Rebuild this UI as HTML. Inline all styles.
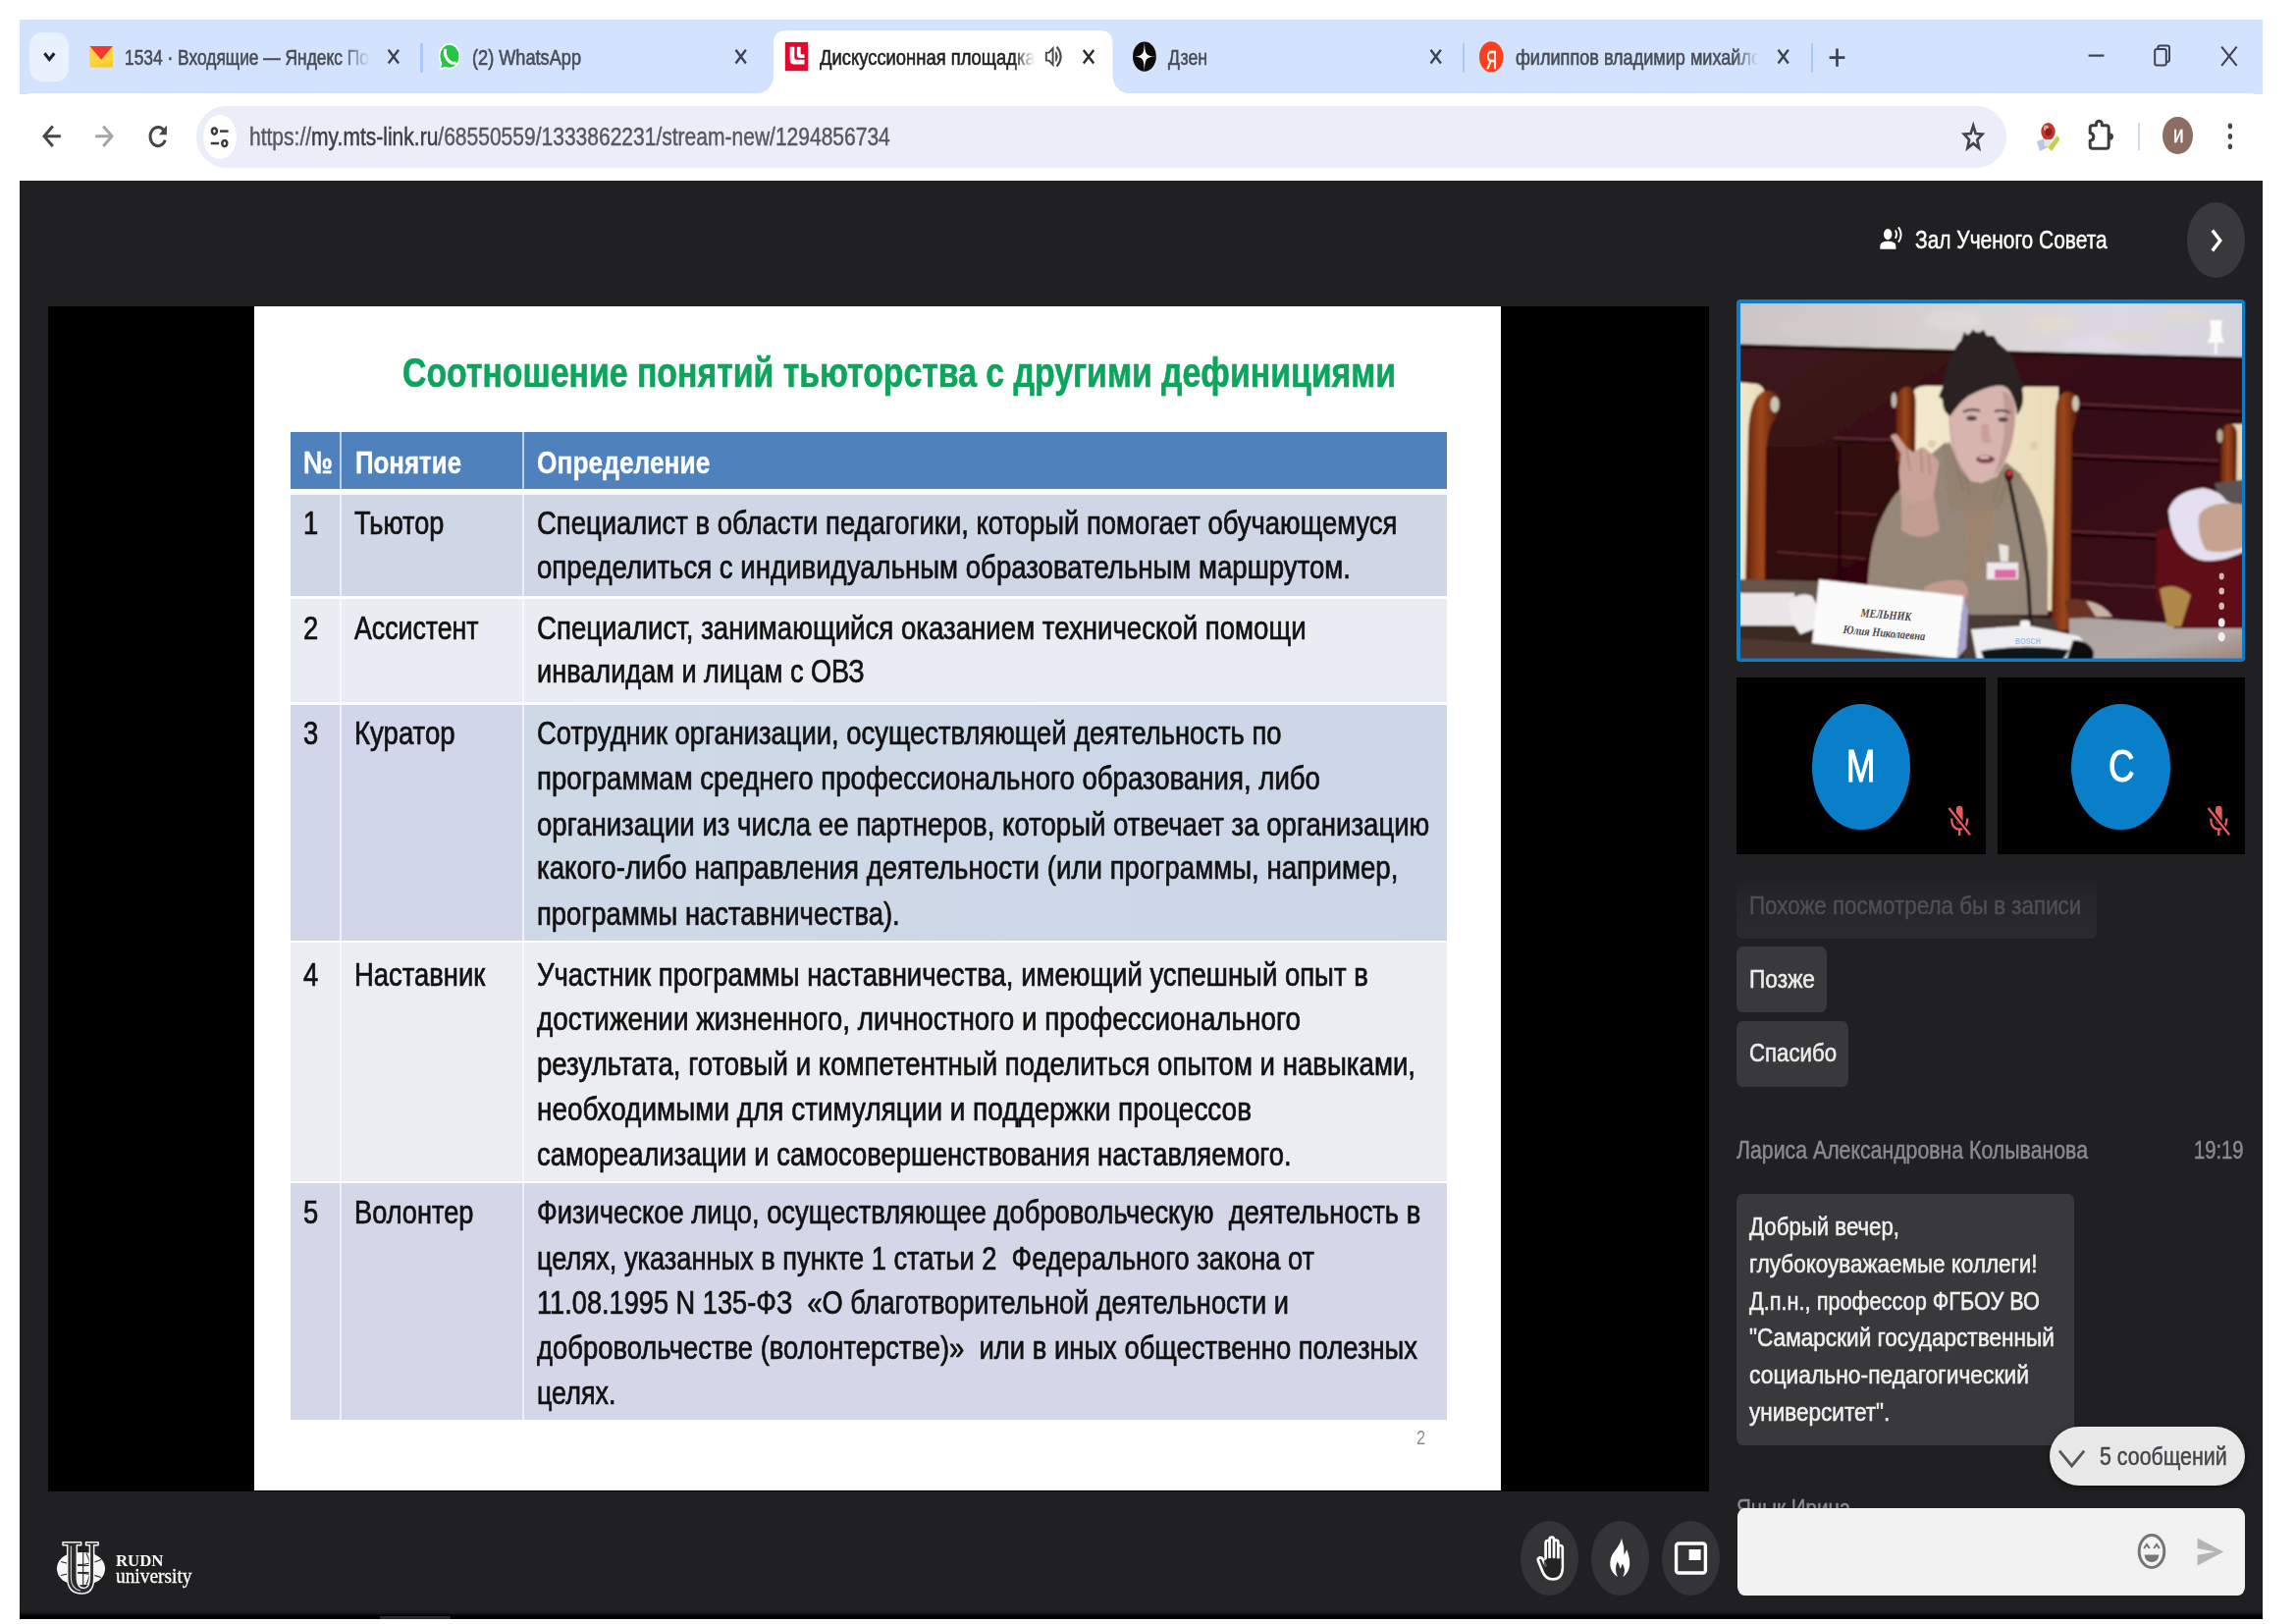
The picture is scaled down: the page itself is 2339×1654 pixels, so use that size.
<!DOCTYPE html>
<html lang="ru"><head><meta charset="utf-8"><title>Дискуссионная площадка</title>
<style>

html,body{margin:0;padding:0;background:#fff;}
body{width:2339px;height:1654px;position:relative;overflow:hidden;font-family:"Liberation Sans",sans-serif;}
div,svg,span.t{position:absolute;}
span.t{white-space:pre;line-height:1;transform-origin:0 0;display:block;}
div.clip{overflow:hidden;}
span.m{visibility:hidden;}

</style></head>
<body>
<div style="left:20.0px;top:20.0px;width:2285.0px;height:76.0px;background:#d3e3fd;"></div>
<div style="left:20.0px;top:95.0px;width:2285.0px;height:89.5px;background:#fff;border-radius:12px 12px 0 0/15px 15px 0 0;"></div>
<div style="left:30.0px;top:32.5px;width:39.6px;height:50.2px;background:#e9f1fe;border-radius:12px/15px;"></div>
<svg style="left:766.0px;top:31.0px;" width="389.5" height="65.0" viewBox="0 0 389.5 65" preserveAspectRatio="none"><path d="M0 65 C12 64.5 22.2 60 22.2 44 L22.2 13 C22.2 4 27 0 35 0 L354.5 0 C362.5 0 367.500 4 367.500 13 L367.500 44 C367.500 60 377.500 64.5 389.5 65 Z" fill="#fff"/></svg>
<div style="left:428.3px;top:44.0px;width:2.4px;height:29.6px;background:#a8c7fa;border-radius:1px;"></div>
<div style="left:1489.8px;top:44.0px;width:2.4px;height:29.6px;background:#a8c7fa;border-radius:1px;"></div>
<div style="left:1844.8px;top:44.0px;width:2.4px;height:29.6px;background:#a8c7fa;border-radius:1px;"></div>
<div style="left:200.3px;top:108.3px;width:1843.7px;height:62.7px;background:#ebeef8;border-radius:31px;"></div>
<div style="left:206.8px;top:116.7px;width:34.0px;height:45.7px;background:#fff;border-radius:50%;"></div>
<div style="left:2178.3px;top:124.5px;width:1.6px;height:28.5px;background:#d2daec;"></div>
<div style="left:2203.4px;top:119.3px;width:30.6px;height:37.9px;background:#8c6d62;border-radius:50%;"></div>
<div style="left:20.0px;top:184.0px;width:2285.0px;height:1465.0px;background:#202022;"></div>
<div style="left:20.0px;top:1640.0px;width:2285.0px;height:9.0px;background:linear-gradient(#202022 0%,#19191b 30%,#000 62%,#000 100%);"></div>
<div style="left:387.0px;top:1645.5px;width:72.0px;height:3.5px;background:#2b2b2d;"></div>
<div style="left:48.5px;top:312.3px;width:1692.5px;height:1206.7px;background:#000;"></div>
<div style="left:258.7px;top:312.3px;width:1270.0px;height:1206.2px;background:#fff;"></div>
<div style="left:295.7px;top:440.3px;width:1178.3px;height:57.5px;background:#4f81bd;"></div>
<div style="left:295.7px;top:497.8px;width:1178.3px;height:6.5px;background:linear-gradient(#fff,#f4f6fa);"></div>
<div style="left:295.7px;top:504.3px;width:1178.3px;height:103.2px;background:#cfd6e6;"></div>
<div style="left:295.7px;top:609.5px;width:1178.3px;height:106.0px;background:#e9ecf3;"></div>
<div style="left:295.7px;top:717.5px;width:1178.3px;height:240.3px;background:#cfd7e7;"></div>
<div style="left:295.7px;top:960.0px;width:1178.3px;height:243.0px;background:#ebedf2;"></div>
<div style="left:295.7px;top:1204.5px;width:1178.3px;height:241.5px;background:#d3d7e8;"></div>
<div style="left:295.7px;top:717.5px;width:237.7px;height:240.3px;background:#d2d6ea;"></div>
<div style="left:533.4px;top:717.5px;width:940.6px;height:240.3px;background:linear-gradient(90deg,#cfd9e6,#cdd6e8);"></div>
<div style="left:346.1px;top:440.3px;width:2.2px;height:1005.7px;background:rgba(255,255,255,.62);"></div>
<div style="left:532.3px;top:440.3px;width:2.2px;height:1005.7px;background:rgba(255,255,255,.62);"></div>
<div style="left:295.7px;top:607.3px;width:1178.3px;height:2.4px;background:rgba(255,255,255,.8);"></div>
<div style="left:295.7px;top:715.3px;width:1178.3px;height:2.4px;background:rgba(255,255,255,.8);"></div>
<div style="left:295.7px;top:957.7px;width:1178.3px;height:2.4px;background:rgba(255,255,255,.8);"></div>
<div style="left:295.7px;top:1202.6px;width:1178.3px;height:2.4px;background:rgba(255,255,255,.8);"></div>
<div style="left:2228.0px;top:206.0px;width:59.0px;height:77.0px;background:#39393b;border-radius:50%;"></div>
<div style="left:1769.3px;top:304.8px;width:518.0px;height:369.5px;background:#0f7dc6;border-radius:4px;"></div>
<div style="left:1769.4px;top:689.7px;width:253.6px;height:180.3px;background:#000;"></div>
<div style="left:2034.6px;top:689.7px;width:252.4px;height:180.3px;background:#000;"></div>
<div style="left:1845.7px;top:716.8px;width:100.8px;height:128.1px;background:#0a7fc9;border-radius:50%;"></div>
<div style="left:2109.8px;top:716.8px;width:100.9px;height:128.1px;background:#0a7fc9;border-radius:50%;"></div>
<div style="left:1769.4px;top:893.0px;width:366.2px;height:63.0px;background:linear-gradient(#202022 0%,#262628 35%,#2b2b2d 100%);border-radius:0 0 6px 6px/0 0 8px 8px;"></div>
<div style="left:1769.4px;top:964.3px;width:91.6px;height:67.0px;background:#39393b;border-radius:6px/8px;"></div>
<div style="left:1769.4px;top:1039.7px;width:113.6px;height:67.0px;background:#39393b;border-radius:6px/8px;"></div>
<div style="left:1769.4px;top:1216.3px;width:343.6px;height:255.7px;background:#39393b;border-radius:6px/8px;"></div>
<div style="left:1549.1px;top:1549.2px;width:59.4px;height:76.0px;background:#343436;border-radius:50%;"></div>
<div style="left:1621.0px;top:1549.2px;width:59.4px;height:76.0px;background:#343436;border-radius:50%;"></div>
<div style="left:1692.6px;top:1549.2px;width:59.4px;height:76.0px;background:#343436;border-radius:50%;"></div>
<svg style="left:1773px;top:309px;" width="511" height="361.5" viewBox="1773 309 511 361.5" preserveAspectRatio="none">
<defs>
<filter id="pb" x="-5%" y="-5%" width="110%" height="110%"><feGaussianBlur stdDeviation="1.3"/></filter>
<filter id="pb2" x="-5%" y="-5%" width="110%" height="110%"><feGaussianBlur stdDeviation="2.6"/></filter>
<linearGradient id="gwall" x1="0" x2="1" y1="0" y2="0"><stop offset="0" stop-color="#cbc5c6"/><stop offset=".45" stop-color="#d8d4d2"/><stop offset=".75" stop-color="#dcd9e4"/><stop offset="1" stop-color="#d6d3dc"/></linearGradient>
<linearGradient id="gpanel" x1="0" x2="1" y1="0" y2="1"><stop offset="0" stop-color="#3c161c"/><stop offset=".5" stop-color="#350d12"/><stop offset="1" stop-color="#3d1118"/></linearGradient>
<linearGradient id="gwood" x1="0" x2="1" y1="0" y2="0"><stop offset="0" stop-color="#64200a"/><stop offset=".45" stop-color="#9d481d"/><stop offset="1" stop-color="#561b08"/></linearGradient>
<linearGradient id="gcream" x1="0" x2="1" y1="0" y2="0"><stop offset="0" stop-color="#f3e9cf"/><stop offset="1" stop-color="#eadcb8"/></linearGradient>
<linearGradient id="gtable" x1="0" x2="1" y1="0" y2="1"><stop offset="0" stop-color="#aba39f"/><stop offset=".6" stop-color="#b2a8a6"/><stop offset="1" stop-color="#9a7f74"/></linearGradient>
<pattern id="rib" width="3.2" height="8" patternUnits="userSpaceOnUse" patternTransform="rotate(8)"><rect width="3.2" height="8" fill="#a09080"/><rect width="1.2" height="8" fill="#85776a"/></pattern>
<clipPath id="pclip"><rect x="1773" y="309" width="511" height="361.5"/></clipPath>
</defs>
<g clip-path="url(#pclip)">
<g filter="url(#pb)">
<!-- wall -->
<rect x="1770" y="306" width="520" height="62" fill="url(#gwall)"/>
<g filter="url(#pb2)" opacity=".55">
<ellipse cx="2090" cy="330" rx="26" ry="9" fill="#e6dccb"/><ellipse cx="2170" cy="344" rx="30" ry="8" fill="#e2d8c8"/><ellipse cx="2225" cy="322" rx="24" ry="7" fill="#e4dccd"/><ellipse cx="1990" cy="326" rx="30" ry="10" fill="#e2dfe0"/><ellipse cx="1850" cy="335" rx="40" ry="10" fill="#d2cccc"/><ellipse cx="2130" cy="350" rx="30" ry="6" fill="#e3e0ee"/>
</g>
<!-- wood panel -->
<polygon points="1770,351 2290,364.3 2290,675 1770,675" fill="url(#gpanel)"/>
<polyline points="1770,352.5 2290,365.8" stroke="#22080c" stroke-width="4" fill="none"/>
<polygon points="1770,455 1935,455 1935,675 1770,675" fill="#300606" opacity=".85"/>
<!-- panel mouldings -->
<g stroke="#6a3038" stroke-width="2" fill="none" opacity=".8">
<polyline points="1868,446 1930,448"/><polyline points="1870,522 1912,524"/><polyline points="1810,562 1900,569"/>
<polyline points="2112,411 2283,419"/><polyline points="2110,463 2260,469"/><polyline points="2110,541 2200,545"/><polyline points="2110,593 2196,598"/>
</g>
<g stroke="#1f0508" stroke-width="3" fill="none" opacity=".8">
<polyline points="1868,450 1930,452"/><polyline points="2112,415 2283,423"/><polyline points="2110,467 2260,473"/><polyline points="2110,545 2200,549"/>
<polyline points="1874,452 1874,600"/>
</g>
<!-- left chair -->
<path d="M1770 389 L1790 391 Q1798 394 1798 402 L1798 600 L1770 600 Z" fill="url(#gcream)"/>
<path d="M1778 604 L1781 440 Q1783 403 1798 398 Q1811 396 1813 408 Q1814 420 1806 430 Q1799 442 1799 470 L1798 604 Z" fill="url(#gwood)"/>
<ellipse cx="1808" cy="412" rx="4.5" ry="8" fill="#c9c4b4"/>
<!-- centre chair -->
<path d="M1948 402 Q1950 393 1962 393 L2097 394 L2097 622 L1948 622 Z" fill="url(#gcream)"/>
<path d="M1931.500 470 L1931.500 412 Q1932 395 1943 394 Q1951.500 394 1951.500 410 L1951 470 Z" fill="url(#gwood)"/>
<ellipse cx="1929.500" cy="407.500" rx="2.800" ry="8" fill="#bdb8aa"/>
<path d="M2089.500 642 L2094 420 Q2095 400 2106 399 Q2117 399 2117 412 Q2116 426 2111 440 L2108.500 642 Z" fill="url(#gwood)"/>
<ellipse cx="2114.5" cy="411" rx="3.5" ry="8" fill="#c9c4b4"/>
<circle cx="2072" cy="454" r="4" fill="#dccfa8"/><circle cx="1968" cy="452" r="4" fill="#dccfa8"/>
<!-- right chair -->
<rect x="2274" y="432" width="12" height="70" fill="#e6d8b4"/>
<path d="M2262 505 L2263 445 Q2264 432 2271 432 Q2279 432 2279 444 L2278 505 Z" fill="url(#gwood)"/>
<ellipse cx="2261.5" cy="444" rx="3" ry="7" fill="#b5ac98"/>
<!-- table surface -->
<polygon points="1770,590 1856,592 1856,640 1770,638" fill="#66544c"/>
<polygon points="1770,636 1860,640 2010,660 2010,675 1770,675" fill="#3b2a24"/>
<polygon points="1770,650 1850,655 1990,668 1990,675 1770,675" fill="#5a4038" opacity=".7"/>
<polygon points="2108,628 2290,640 2290,675 2108,675" fill="url(#gtable)"/>
<polygon points="2000,624 2092,630 2110,675 2000,675" fill="#4a3a36"/>
<!-- seat hint -->
<path d="M2103 612 Q2125 604 2150 628 L2108 630 Z" fill="#6b3320"/><path d="M2125 612 Q2142 614 2152 628 L2135 628 Z" fill="#c8b4a4"/>
<!-- person right -->
<path d="M2197 540 L2215 536 L2290 560 L2290 640 L2215 640 L2196 610 Z" fill="#5f0b12"/>
<path d="M2200 600 Q2215 592 2232 606 L2222 638 L2208 638 Z" fill="#b08848"/>
<path d="M2256 492 L2290 488 L2290 520 L2262 514 Z" fill="#5b5152"/>
<path d="M2209 520 Q2215 500 2245 497 Q2262 500 2268 510 L2290 520 L2290 560 Q2262 575 2240 570 Q2212 560 2209 520 Z" fill="#e4e0ef"/>
<path d="M2240 525 Q2250 508 2290 514 L2290 556 Q2262 566 2247 560 Q2238 545 2240 525 Z" fill="#c6a291"/>
<!-- papers -->
<rect x="1770" y="604" width="58" height="33" fill="#e9e5e6"/>
<path d="M1822 612 Q1834 602 1846 607 L1854 622 L1850 640 L1834 646 L1826 634 Z" fill="#efecee"/>
<!-- torso / sweater -->
<path d="M1902 612 Q1903 555 1916 529 Q1926 508 1934 500 L1968 462 L1982 450 L1996 488 L2014 515 L2043 471 Q2062 484 2072 505 Q2084 530 2086 560 L2086 624 L2004 624 L2001 612 Z" fill="url(#rib)"/>
<path d="M1996 488 Q2010 500 2034 500 L2030 540 L2012 600 L2003 600 L2004 540 Z" fill="#9d846f"/>
<path d="M1992 478 Q2010 497 2036 497 L2042 472 L2030 500 Q2010 503 1994 490 Z" fill="#8f7a68"/>
<!-- forearm on table -->
<path d="M1958 598 Q1985 585 2004 590 L2060 596 Q2084 600 2086 612 L2086 626 L2006 626 L2000 606 Z" fill="#95867a"/>
<path d="M1960 598 Q1980 588 2000 592 Q2008 600 2003 611 Q1990 606 1962 606 Z" fill="#c39b8d"/>
<!-- raised hand -->
<path d="M1926 444.500 Q1929 441 1932.500 442.500 L1942 455.500 L1949 460.500 L1957.500 455.500 Q1961 455 1964 459 L1973.500 467.500 Q1976 470 1975 475 L1969.500 505 Q1955 516 1937 512.500 L1934.500 480 L1936.500 462 Z" fill="#caa297"/>
<path d="M1942 456 L1946 480 M1957 457 L1958 482 M1965 462 L1966 484" stroke="#a67e74" stroke-width="1.6" fill="none" opacity=".7"/>
<path d="M1937 505 Q1955 516 1970 503 L1976 540 Q1956 554 1937 540 Z" fill="#c4a094" opacity=".92"/>
<path d="M1979 455 L1986 450 L1998 478 L2018 492 L2035 485 L2044 471 L2060 484 L2036 520 L1986 520 Z" fill="#93826f"/>
<path d="M1990 462 L2000 500 M1996 470 L2008 505 M2040 480 L2030 510 M2046 478 L2038 512" stroke="#7d6e5e" stroke-width="1.4" opacity=".6" fill="none"/>
<!-- face -->
<path d="M1984 415 Q1990 398 2010 394 L2044 392 Q2054 400 2053 420 Q2053 440 2048 456 Q2042 474 2031 486 Q2020 494 2008 490 Q1998 478 1991 462 Q1986 444 1985 425 Z" fill="#d7b4ae"/>
<path d="M2040 398 Q2054 404 2053 424 Q2052 446 2046 462 Q2040 478 2030 487 Q2042 460 2042 430 Q2042 410 2040 398 Z" fill="#b8928c" opacity=".75"/>
<path d="M1986 425 Q1988 450 1996 470 Q2002 482 2008 490 Q1994 480 1989 458 Q1985 440 1986 425 Z" fill="#c09a94" opacity=".6"/>
<path d="M2000 419.500 Q2008 415.500 2017 418.500" stroke="#3a2c2a" stroke-width="2" fill="none"/><path d="M2032 419 Q2041 416.500 2048 420.500" stroke="#3a2c2a" stroke-width="2" fill="none"/>
<ellipse cx="2008.500" cy="426" rx="5.500" ry="2.600" fill="#55423f"/><ellipse cx="2040.500" cy="427.300" rx="5" ry="2.400" fill="#55423f"/>
<path d="M2019 432 Q2017 446 2020 450 Q2024 452.500 2029 450 Q2026 444 2026 432 Z" fill="#c39a92" opacity=".75"/>
<ellipse cx="2022.500" cy="467.800" rx="9.500" ry="4" fill="#82464c"/><rect x="2017" y="464.800" width="9" height="2.300" fill="#e2d2cc"/>
<!-- hair -->
<path d="M1978.800 406 Q1979 388 1986 367 Q1992 349 2006 340 Q2014 336 2021 341 Q2035 347 2048 360.500 Q2056 376 2060 396 Q2062.500 408 2059 416 L2055 423 Q2054 410 2048 399 Q2044 392 2036 392.500 Q2022 394 2005 403.500 Q1995 411 1986.500 424 Q1982 420 1981 418 Q1978.600 412 1978.800 406 Z" fill="#2a2422"/>
<path d="M1998 346 L2001 338 L2005 342 L2010 335.500 L2014 340 L2021 336 L2024 342 L2031 342 L2036 350 Z" fill="#2a2422"/>
<path d="M2052 380 L2064 392 L2058 398 Z M1980 392 L1975 404 L1981 408 Z" fill="#2a2422"/>
<!-- badge -->
<path d="M2036 554 L2046 556 L2046 572 L2038 572 Z" fill="#e8e4e0"/>
<rect x="2024" y="573" width="32" height="17" fill="#eee8ea"/><rect x="2032" y="580" width="22" height="9" fill="#e06aa8"/>
<!-- microphone -->
<path d="M2046 487 Q2058 540 2066 590 L2069 642" stroke="#241e1c" stroke-width="3.6" fill="none"/>
<ellipse cx="2046.5" cy="484" rx="4.5" ry="6" fill="#3a1418"/><circle cx="2047" cy="482" r="2.6" fill="#e0303a"/>
<!-- device -->
<path d="M2008 641 L2066 637 L2118 648 L2128 660 L2120 672 L2014 672 Z" fill="#efeff1"/>
<path d="M2018 663 Q2060 655 2108 662 L2100 675 L2022 675 Z" fill="#10121f"/>
<path d="M2112 652 Q2128 652 2133 664 L2132 675 L2104 675 Z" fill="#0c0c10"/>
<rect x="2058" y="632" width="10" height="9" rx="2" fill="#f4f4f4"/>
<!-- name card -->
<polygon points="1853,590 2000.5,607 1993.5,671 1846,655" fill="#fbfbfb"/>
<polygon points="2000.5,607 2005,622 2003,660 1993.5,671" fill="#aaa3cf"/>
</g>
<!-- slider dots -->
<g fill="#e9dcd6"><ellipse cx="2263.2" cy="587" rx="2.6" ry="3.4" fill="#d2b2aa"/><ellipse cx="2263.2" cy="602" rx="2.8" ry="3.6" fill="#d8bcb4"/><ellipse cx="2263.2" cy="617.3" rx="2.8" ry="3.8" fill="#d4b6ae"/><ellipse cx="2263.2" cy="634" rx="3.4" ry="4.6" fill="#efebea"/><ellipse cx="2263.2" cy="648.7" rx="3.6" ry="4.8" fill="#f1eeee"/></g>
<!-- pin -->
<g fill="#fff" filter="url(#pb)" opacity=".95"><path d="M2251 326 L2264 326 Q2262 333 2263.5 343 L2266 349 L2248.5 349 L2251.5 343 Q2253 333 2251 326 Z"/><rect x="2256" y="348" width="2.6" height="12.5"/></g>
</g>
</svg>
<span class="t" style="left:2053px;top:648.5px;font-size:9px;color:#9cc0ea;font-weight:700;transform:scaleX(.8);z-index:3;">BOSCH</span>

<svg style="left:0;top:0;" width="2339" height="1654" viewBox="0 0 2339 1654"><polyline points="45.4,54.3 50.3,60.6 55.3,54.3" stroke="#1a2133" stroke-width="3.1" fill="none"/>
<rect x="91.4" y="47" width="23.5" height="21.4" fill="#fcd43a"/><polygon points="91.4,47 114.9,47 103.1,60.8" fill="#f8352f"/><polygon points="91.4,68.4 114.9,68.4 114.9,62 " fill="#fbbf2d" opacity=".6"/>
<path d="M395.7 50.8 L406.1 64.4 M406.1 50.8 L395.7 64.4" stroke="#3c4252" stroke-width="2.4" fill="none"/>
<path d="M749.5 50.8 L759.9 64.4 M759.9 50.8 L749.5 64.4" stroke="#3c4252" stroke-width="2.4" fill="none"/>
<path d="M1457.5 50.8 L1467.9 64.4 M1467.9 50.8 L1457.5 64.4" stroke="#3c4252" stroke-width="2.4" fill="none"/>
<path d="M1811.5 50.8 L1821.9 64.4 M1821.9 50.8 L1811.5 64.4" stroke="#3c4252" stroke-width="2.4" fill="none"/>
<path d="M1103.8 50.9 L1114.2 64.5 M1114.2 50.9 L1103.8 64.5" stroke="#2a2a2a" stroke-width="2.4" fill="none"/>
<g><path d="M447.3 71.6 L449.6 62.5 L456 68.6 Z" fill="#fff"/><ellipse cx="457.9" cy="57.2" rx="11" ry="13.2" fill="#fff"/><ellipse cx="457.9" cy="57.2" rx="9.5" ry="11.5" fill="#27c546"/><path d="M449.2 69.2 L450.6 63.5 L454.6 67.4 Z" fill="#27c546"/><path d="M453.6 51.2 Q452.6 56.5 456.2 61 Q459.6 65 463.4 64.2" stroke="#fff" stroke-width="3" fill="none" stroke-linecap="round"/></g>
<rect x="799.8" y="42.9" width="23.3" height="29.3" fill="#e3082d"/><path d="M804.7 47.8 H809.3 V58.5 Q809.3 60.7 811.3 60.7 H819.5 V65.4 H808.7 Q804.7 65.4 804.7 60.5 Z" fill="#fff"/><path d="M811.9 47.8 H815.6 V54 Q815.6 55.3 816.8 55.3 H819.5 V58.9 H815 Q811.9 58.9 811.9 55 Z" fill="#fff"/>
<g stroke="#474747" fill="none"><path d="M1065.8 53.6 H1068.6 L1072.6 49.4 V65.800 L1068.6 61.600 H1065.8 Z" stroke-width="1.9"/><path d="M1075.800 52.800 Q1078.800 57.600 1075.800 62.400 Z" fill="#474747" stroke-width="1"/><path d="M1076.600 47.600 Q1084.600 57.600 1076.600 67.600" stroke-width="2.100"/></g>
<ellipse cx="1165.9" cy="57.6" rx="11.9" ry="15.2" fill="#0b0b0b"/><path d="M1165.9 42.4 C1166.5 55.8 1167.3 56.9 1177.8 57.6 C1167.3 58.3 1166.5 59.4 1165.9 72.8 C1165.3 59.4 1164.5 58.3 1154.0 57.6 C1164.5 56.9 1165.3 55.8 1165.9 42.4 Z" fill="#fff"/>
<ellipse cx="1519.2" cy="57.9" rx="12.2" ry="15.7" fill="#fc3f1d"/>
<path d="M1863.6 58.7 H1879.4 M1871.5 49.6 V67.8" stroke="#3c4252" stroke-width="2.7" fill="none"/>
<path d="M2127.6 56.6 H2143.4" stroke="#3c4252" stroke-width="2.2" fill="none"/>
<g stroke="#3c4252" stroke-width="2" fill="none"><rect x="2195.2" y="50" width="11.6" height="16.6" rx="2"/><path d="M2198.4 50 V48.4 Q2198.4 46.4 2200.4 46.4 H2208 Q2210 46.4 2210 48.4 V61 Q2210 63 2208 63 H2206.8"/></g>
<path d="M2263.2 47.6 L2278.6 66.8 M2278.6 47.6 L2263.2 66.8" stroke="#3c4252" stroke-width="2.1" fill="none"/>
<path d="M61.8 138.7 H46 M53.8 128.6 L45 138.7 L53.8 148.9" stroke="#444746" stroke-width="3" fill="none"/>
<path d="M97.1 138.7 H113 M105.2 128.6 L114 138.7 L105.2 148.9" stroke="#a6a6a6" stroke-width="3" fill="none"/>
<path d="M167.2 133.2 A7.9 9.6 0 1 0 168.3 142.6" stroke="#444746" stroke-width="3" fill="none"/><polygon points="169.9,127.6 169.9,137.2 162,137.2" fill="#444746"/>
<g stroke="#3c3c3c" stroke-width="2.5" fill="none"><ellipse cx="218.4" cy="133.6" rx="2.5" ry="3.1"/><path d="M224 133.6 H232.6"/><path d="M214.7 146 H223.2"/><ellipse cx="228.8" cy="146" rx="2.5" ry="3.1"/></g>
<polygon points="2010.2,128.0 2012.7,136.1 2019.5,136.7 2014.3,142.3 2016.0,150.8 2010.2,146.1 2004.4,150.8 2006.1,142.3 2000.9,136.7 2007.7,136.1" stroke="#444746" stroke-width="2.7" fill="none" stroke-linejoin="miter"/>
<g><ellipse cx="2086.5" cy="134" rx="7.2" ry="9" fill="#c2392a"/><ellipse cx="2084.5" cy="130.5" rx="2.6" ry="3" fill="#f0a090"/><ellipse cx="2087" cy="134.5" rx="3.5" ry="4" fill="#8e1f16"/><path d="M2075 144 L2083 141 L2086 150 L2078 154 Z" fill="#b9c7e6"/><path d="M2086 150 L2096 138 L2098.5 142 L2090 154 Z" fill="#c8cf4a"/><path d="M2082 142 L2090 142 L2088 149 L2083 149 Z" fill="#e9e3e0"/></g>
<path d="M2131.7 127.8 H2135.4 Q2135.2 123.2 2138.4 123.2 Q2141.6 123.2 2141.4 127.8 H2145.7 Q2148.2 127.8 2148.2 130.6 V148.400 Q2148.2 151.200 2145.7 151.200 H2131.7 Q2129.2 151.200 2129.2 148.400 V143.200 Q2132.800 143 2132.800 139.300 Q2132.800 135.600 2129.2 135.400 V130.6 Q2129.2 127.8 2131.7 127.8 Z" stroke="#3c3c3c" stroke-width="3" fill="none" stroke-linejoin="round"/><path d="M2149.2 135.2 Q2153 135.600 2153 139 Q2153 142.400 2149.2 142.800 Z" fill="#3c3c3c"/>
<ellipse cx="2271.9" cy="128.4" rx="2.2" ry="2.8" fill="#444746"/>
<ellipse cx="2271.9" cy="138.9" rx="2.2" ry="2.8" fill="#444746"/>
<ellipse cx="2271.9" cy="149.3" rx="2.2" ry="2.8" fill="#444746"/>
<g fill="#fff"><ellipse cx="1923.2" cy="238.6" rx="4.2" ry="5.6"/><path d="M1915.3 253.8 V250.5 Q1915.3 246 1923.2 245.6 Q1931.4 246 1931.4 250.5 V253.8 Z"/></g><g stroke="#fff" stroke-width="1.9" fill="none"><path d="M1930.8 234.6 Q1933.4 238.6 1930.8 242.8"/><path d="M1934 231.4 Q1939.2 238.8 1934 246.6"/></g>
<polyline points="2253.8,234.6 2261.8,245 2253.8,255.4" stroke="#fff" stroke-width="3.4" fill="none"/>
<g stroke="#ea5a5e" fill="none"><path d="M1996.2 820.8 Q1999.6 820.8 1999.6 825 V835 Q1999.6 839.2 1996.2 839.2 Q1992.8 839.2 1992.8 835 V825 Q1992.8 820.8 1996.2 820.8 Z" fill="#ea5a5e" stroke="none"/><path d="M1988.2 833.5 Q1988.2 844.5 1996.2 844.5 Q2004.2 844.5 2004.2 833.5" stroke-width="2.2"/><path d="M1996.2 844.5 V851" stroke-width="2.4"/><path d="M1986.4 823 L2006.6 850.2" stroke="#000" stroke-width="5"/><path d="M1985.4 823 L2007.0 850.2" stroke-width="2.3"/></g>
<g stroke="#ea5a5e" fill="none"><path d="M2260.3 820.8 Q2263.7 820.8 2263.7 825 V835 Q2263.7 839.2 2260.3 839.2 Q2256.9 839.2 2256.9 835 V825 Q2256.9 820.8 2260.3 820.8 Z" fill="#ea5a5e" stroke="none"/><path d="M2252.3 833.5 Q2252.3 844.5 2260.3 844.5 Q2268.3 844.5 2268.3 833.5" stroke-width="2.2"/><path d="M2260.3 844.5 V851" stroke-width="2.4"/><path d="M2250.5 823 L2270.7 850.2" stroke="#000" stroke-width="5"/><path d="M2249.5 823 L2271.1 850.2" stroke-width="2.3"/></g>
<g stroke="#fff" stroke-width="2.7" fill="none" stroke-linejoin="round" stroke-linecap="round"><path d="M1574.6 1588 V1571.5 Q1574.6 1569 1576.6 1569 Q1578.6 1569 1578.6 1571.5 M1578.6 1586 V1568 Q1578.6 1565.6 1580.8 1565.6 Q1583 1565.6 1583 1568 V1586 M1583 1571 Q1583 1568.6 1585.2 1568.6 Q1587.4 1568.6 1587.4 1571 V1586.5 M1587.4 1576.5 Q1587.4 1574 1589.6 1574 Q1591.8 1574 1591.8 1576.5 V1596 Q1591.8 1608.4 1581.8 1608.4 Q1574.6 1608.4 1571.4 1600.5 L1567 1589.6 Q1566.2 1587.2 1568.4 1586.4 Q1570.4 1585.8 1571.6 1588 L1574.6 1594.5"/></g>
<path d="M1575.5 1587.5 H1590.5 V1597 Q1590.5 1607 1581.8 1607 Q1576 1607 1573.5 1600 L1572.8 1590 Z" fill="#1d1d1f" opacity=".75"/>
<path transform="translate(.5 0)" d="M1651.4 1566.8 Q1654.5 1575 1654 1583.5 Q1655.8 1581 1656.6 1578 Q1660.4 1587 1659.6 1595 Q1658.6 1602 1652.8 1606 Q1656.4 1598 1652.2 1592.5 Q1651.6 1596 1649.8 1597.6 Q1649.4 1593 1647.2 1590.6 Q1643.6 1598 1647.4 1606 Q1641 1602 1639.9 1595 Q1639 1586 1645 1579 Q1650.6 1572 1651.4 1566.8 Z" fill="#fff"/>
<rect x="1707.6" y="1572" width="29.8" height="30" rx="2.6" stroke="#fff" stroke-width="3.4" fill="none"/><rect x="1720.6" y="1578" width="12" height="11" fill="#fff"/>
<g><path d="M57.9 1597.600 Q58.500 1586 72 1582 Q82.500 1580 93 1582 Q106.500 1586 107.100 1597.600 Q106.500 1609.500 93 1613.300 Q82.500 1615.300 72 1613.300 Q58.500 1609.500 57.9 1597.600 Z" fill="#f6f6f6"/><g stroke="#2a2a2c" stroke-width="1.1" fill="none"><path d="M62 1590.500 Q82 1597.500 103 1588.500"/><path d="M62 1604.500 Q82 1599 103 1606.500"/><path d="M78 1594.500 H92"/><path d="M78 1601.500 H92"/><path d="M88 1582 Q96 1597.600 88 1613.500"/><path d="M84.700 1580.500 V1616"/></g><path d="M64 1570.700 H82.700 V1573.700 H78.300 V1606 Q78.300 1617.500 85.500 1617.500 Q91.400 1617.500 91.400 1606 V1573.700 H87.500 V1570.700 H100.100 V1573.700 H95.700 V1607 Q95.700 1623 83.500 1623 Q68.700 1623 68.700 1607 V1573.700 H64 Z" fill="#2c2c2e" stroke="#f2f2f2" stroke-width="1.5" stroke-linejoin="round"/><path d="M72.300 1574.500 V1607 Q72.300 1618 82 1620.300" stroke="#d8d8d8" stroke-width="1.1" fill="none"/></g></svg>
<div class="clip" style="left:127.0px;top:37.6px;width:250.0px;height:48.9px;-webkit-mask-image:linear-gradient(90deg,#000 222.0px,transparent 250.0px);mask-image:linear-gradient(90deg,#000 222.0px,transparent 250.0px);"><span class="t" id="t0" style="left:0.0px;top:10px;font-size:22.20px;color:#474c55;font-family:'Liberation Sans', sans-serif;transform:scaleX(0.7833);-webkit-text-stroke:0.6px;">1534 · Входящие — Яндекс Почта</span></div>
<span class="t" id="t1" style="left:481.0px;top:47.6px;font-size:22.20px;color:#474c55;font-family:'Liberation Sans', sans-serif;transform:scaleX(0.8183);-webkit-text-stroke:0.6px;">(2) WhatsApp</span>
<div class="clip" style="left:835.0px;top:37.6px;width:219.0px;height:48.9px;-webkit-mask-image:linear-gradient(90deg,#000 197.0px,transparent 219.0px);mask-image:linear-gradient(90deg,#000 197.0px,transparent 219.0px);"><span class="t" id="t2" style="left:0.0px;top:10px;font-size:22.20px;color:#1f1f1f;font-family:'Liberation Sans', sans-serif;transform:scaleX(0.8292);-webkit-text-stroke:0.6px;">Дискуссионная площадка по</span></div>
<span class="t" id="t3" style="left:1189.6px;top:47.6px;font-size:22.20px;color:#474c55;font-family:'Liberation Sans', sans-serif;transform:scaleX(0.7955);-webkit-text-stroke:0.6px;">Дзен</span>
<div class="clip" style="left:1543.7px;top:37.6px;width:247.3px;height:48.9px;-webkit-mask-image:linear-gradient(90deg,#000 223.3px,transparent 247.3px);mask-image:linear-gradient(90deg,#000 223.3px,transparent 247.3px);"><span class="t" id="t4" style="left:0.0px;top:10px;font-size:22.20px;color:#474c55;font-family:'Liberation Sans', sans-serif;transform:scaleX(0.8148);-webkit-text-stroke:0.6px;">филиппов владимир михайлович</span></div>
<span class="t" id="t5" style="left:254.2px;top:127.1px;font-size:25.50px;color:#56585d;font-family:'Liberation Sans', sans-serif;transform:scaleX(0.8243);-webkit-text-stroke:0.45px;">https://<span style="color:#3c3d41">my.mts-link.ru</span>/68550559/1333862231/stream-new/1294856734</span>
<span class="t" id="t6" style="left:1513.8px;top:47.6px;font-size:26.00px;color:#fff;font-family:'Liberation Sans', sans-serif;transform:scaleX(0.5857);-webkit-text-stroke:0.7px;">Я</span>
<span class="t" id="t7" style="left:2213.6px;top:126.1px;font-size:23.50px;color:#fff;font-family:'Liberation Sans', sans-serif;transform:scaleX(0.8067);-webkit-text-stroke:0.4px;">и</span>
<span class="t" id="t8" style="left:1951.3px;top:230.6px;font-size:26.20px;color:#fff;font-family:'Liberation Sans', sans-serif;transform:scaleX(0.7998);-webkit-text-stroke:.5px #fff;">Зал Ученого Совета</span>
<span class="t" id="t9" style="left:1881.2px;top:756.2px;font-size:47.00px;color:#fff;font-family:'Liberation Sans', sans-serif;transform:scaleX(0.7534);-webkit-text-stroke:1.1px;">M</span>
<span class="t" id="t10" style="left:2147.8px;top:756.2px;font-size:47.00px;color:#fff;font-family:'Liberation Sans', sans-serif;transform:scaleX(0.7805);-webkit-text-stroke:1.1px;">C</span>
<span class="t" id="t11" style="left:1781.7px;top:908.6px;font-size:26.00px;color:#4f4f53;font-family:'Liberation Sans', sans-serif;transform:scaleX(0.8602);-webkit-text-stroke:0.5px;">Похоже посмотрела бы в записи</span>
<span class="t" id="t12" style="left:1781.7px;top:983.5px;font-size:26.00px;color:#ececec;font-family:'Liberation Sans', sans-serif;transform:scaleX(0.8742);-webkit-text-stroke:0.55px;">Позже</span>
<span class="t" id="t13" style="left:1781.7px;top:1059.0px;font-size:26.00px;color:#ececec;font-family:'Liberation Sans', sans-serif;transform:scaleX(0.8541);-webkit-text-stroke:0.55px;">Спасибо</span>
<span class="t" id="t14" style="left:1769.4px;top:1157.6px;font-size:26.00px;color:#8a8a8f;font-family:'Liberation Sans', sans-serif;transform:scaleX(0.8187);-webkit-text-stroke:0.5px;">Лариса Александровна Колыванова</span>
<span class="t" id="t15" style="left:2235.4px;top:1157.6px;font-size:26.00px;color:#8a8a8f;font-family:'Liberation Sans', sans-serif;transform:scaleX(0.7760);-webkit-text-stroke:0.5px;">19:19</span>
<span class="t" id="t16" style="left:1781.7px;top:1236.4px;font-size:26.00px;color:#f0f0f0;font-family:'Liberation Sans', sans-serif;transform:scaleX(0.8550);-webkit-text-stroke:0.55px;">Добрый вечер,</span>
<span class="t" id="t17" style="left:1781.7px;top:1274.2px;font-size:26.00px;color:#f0f0f0;font-family:'Liberation Sans', sans-serif;transform:scaleX(0.8643);-webkit-text-stroke:0.55px;">глубокоуважаемые коллеги!</span>
<span class="t" id="t18" style="left:1781.7px;top:1311.6px;font-size:26.00px;color:#f0f0f0;font-family:'Liberation Sans', sans-serif;transform:scaleX(0.8358);-webkit-text-stroke:0.55px;">Д.п.н., профессор ФГБОУ ВО</span>
<span class="t" id="t19" style="left:1781.7px;top:1349.0px;font-size:26.00px;color:#f0f0f0;font-family:'Liberation Sans', sans-serif;transform:scaleX(0.8691);-webkit-text-stroke:0.55px;">&quot;Самарский государственный</span>
<span class="t" id="t20" style="left:1781.7px;top:1386.7px;font-size:26.00px;color:#f0f0f0;font-family:'Liberation Sans', sans-serif;transform:scaleX(0.8790);-webkit-text-stroke:0.55px;">социально-педагогический</span>
<span class="t" id="t21" style="left:1781.7px;top:1425.0px;font-size:26.00px;color:#f0f0f0;font-family:'Liberation Sans', sans-serif;transform:scaleX(0.8663);-webkit-text-stroke:0.55px;">университет&quot;.</span>
<span class="t" id="t22" style="left:2139.3px;top:1469.8px;font-size:26.00px;color:#45464a;font-family:'Liberation Sans', sans-serif;transform:scaleX(0.8221);z-index:6;-webkit-text-stroke:0.5px;">5 сообщений</span>
<span class="t" id="t23" style="left:1769.4px;top:1522.5px;font-size:26.00px;color:#8a8a8f;font-family:'Liberation Sans', sans-serif;transform:scaleX(0.7916);z-index:1;-webkit-text-stroke:0.5px;">Янык Ирина</span>
<span class="t" id="t24" style="left:410.0px;top:359.3px;font-size:42.40px;color:#0ba55c;font-family:'Liberation Sans', sans-serif;font-weight:700;transform:scaleX(0.7976);-webkit-text-stroke:.6px #0aa35b;">Соотношение понятий тьюторства с другими дефинициями</span>
<span class="t" id="t25" style="left:308.5px;top:454.9px;font-size:32.00px;color:#fff;font-family:'Liberation Sans', sans-serif;font-weight:700;transform:scaleX(0.8410);-webkit-text-stroke:.4px #fff;">№</span>
<span class="t" id="t26" style="left:361.5px;top:454.9px;font-size:32.00px;color:#fff;font-family:'Liberation Sans', sans-serif;font-weight:700;transform:scaleX(0.8079);-webkit-text-stroke:.4px #fff;">Понятие</span>
<span class="t" id="t27" style="left:547.0px;top:454.9px;font-size:32.00px;color:#fff;font-family:'Liberation Sans', sans-serif;font-weight:700;transform:scaleX(0.8236);-webkit-text-stroke:.4px #fff;">Определение</span>
<span class="t" id="t28" style="left:547.0px;top:516.6px;font-size:32.30px;color:#111;font-family:'Liberation Sans', sans-serif;transform:scaleX(0.8499);-webkit-text-stroke:.7px #111;">Специалист в области педагогики, который помогает обучающемуся</span>
<span class="t" id="t29" style="left:547.0px;top:562.3px;font-size:32.30px;color:#111;font-family:'Liberation Sans', sans-serif;transform:scaleX(0.8545);-webkit-text-stroke:.7px #111;">определиться с индивидуальным образовательным маршрутом.</span>
<span class="t" id="t30" style="left:547.0px;top:624.3px;font-size:32.30px;color:#111;font-family:'Liberation Sans', sans-serif;transform:scaleX(0.8552);-webkit-text-stroke:.7px #111;">Специалист, занимающийся оказанием технической помощи</span>
<span class="t" id="t31" style="left:547.0px;top:668.2px;font-size:32.30px;color:#111;font-family:'Liberation Sans', sans-serif;transform:scaleX(0.8400);-webkit-text-stroke:.7px #111;">инвалидам и лицам с ОВЗ</span>
<span class="t" id="t32" style="left:547.0px;top:731.1px;font-size:32.30px;color:#111;font-family:'Liberation Sans', sans-serif;transform:scaleX(0.8476);-webkit-text-stroke:.7px #111;">Сотрудник организации, осуществляющей деятельность по</span>
<span class="t" id="t33" style="left:547.0px;top:776.8px;font-size:32.30px;color:#111;font-family:'Liberation Sans', sans-serif;transform:scaleX(0.8543);-webkit-text-stroke:.7px #111;">программам среднего профессионального образования, либо</span>
<span class="t" id="t34" style="left:547.0px;top:823.8px;font-size:32.30px;color:#111;font-family:'Liberation Sans', sans-serif;transform:scaleX(0.8541);-webkit-text-stroke:.7px #111;">организации из числа ее партнеров, который отвечает за организацию</span>
<span class="t" id="t35" style="left:547.0px;top:868.3px;font-size:32.30px;color:#111;font-family:'Liberation Sans', sans-serif;transform:scaleX(0.8560);-webkit-text-stroke:.7px #111;">какого-либо направления деятельности (или программы, например,</span>
<span class="t" id="t36" style="left:547.0px;top:915.3px;font-size:32.30px;color:#111;font-family:'Liberation Sans', sans-serif;transform:scaleX(0.8493);-webkit-text-stroke:.7px #111;">программы наставничества).</span>
<span class="t" id="t37" style="left:547.0px;top:976.7px;font-size:32.30px;color:#111;font-family:'Liberation Sans', sans-serif;transform:scaleX(0.8521);-webkit-text-stroke:.7px #111;">Участник программы наставничества, имеющий успешный опыт в</span>
<span class="t" id="t38" style="left:547.0px;top:1022.4px;font-size:32.30px;color:#111;font-family:'Liberation Sans', sans-serif;transform:scaleX(0.8616);-webkit-text-stroke:.7px #111;">достижении жизненного, личностного и профессионального</span>
<span class="t" id="t39" style="left:547.0px;top:1068.2px;font-size:32.30px;color:#111;font-family:'Liberation Sans', sans-serif;transform:scaleX(0.8552);-webkit-text-stroke:.7px #111;">результата, готовый и компетентный поделиться опытом и навыками,</span>
<span class="t" id="t40" style="left:547.0px;top:1114.1px;font-size:32.30px;color:#111;font-family:'Liberation Sans', sans-serif;transform:scaleX(0.8644);-webkit-text-stroke:.7px #111;">необходимыми для стимуляции и поддержки процессов</span>
<span class="t" id="t41" style="left:547.0px;top:1159.8px;font-size:32.30px;color:#111;font-family:'Liberation Sans', sans-serif;transform:scaleX(0.8468);-webkit-text-stroke:.7px #111;">самореализации и самосовершенствования наставляемого.</span>
<span class="t" id="t42" style="left:547.0px;top:1218.6px;font-size:32.30px;color:#111;font-family:'Liberation Sans', sans-serif;transform:scaleX(0.8463);-webkit-text-stroke:.7px #111;">Физическое лицо, осуществляющее добровольческую  деятельность в</span>
<span class="t" id="t43" style="left:547.0px;top:1265.6px;font-size:32.30px;color:#111;font-family:'Liberation Sans', sans-serif;transform:scaleX(0.8429);-webkit-text-stroke:.7px #111;">целях, указанных в пункте 1 статьи 2  Федерального закона от</span>
<span class="t" id="t44" style="left:547.0px;top:1311.4px;font-size:32.30px;color:#111;font-family:'Liberation Sans', sans-serif;transform:scaleX(0.8419);-webkit-text-stroke:.7px #111;">11.08.1995 N 135-ФЗ  «О благотворительной деятельности и</span>
<span class="t" id="t45" style="left:547.0px;top:1357.1px;font-size:32.30px;color:#111;font-family:'Liberation Sans', sans-serif;transform:scaleX(0.8488);-webkit-text-stroke:.7px #111;">добровольчестве (волонтерстве)»  или в иных общественно полезных</span>
<span class="t" id="t46" style="left:547.0px;top:1402.8px;font-size:32.30px;color:#111;font-family:'Liberation Sans', sans-serif;transform:scaleX(0.8333);-webkit-text-stroke:.7px #111;">целях.</span>
<span class="t" id="t47" style="left:361.0px;top:516.6px;font-size:32.30px;color:#111;font-family:'Liberation Sans', sans-serif;transform:scaleX(0.8375);-webkit-text-stroke:.7px #111;">Тьютор</span>
<span class="t" id="t48" style="left:361.0px;top:624.3px;font-size:32.30px;color:#111;font-family:'Liberation Sans', sans-serif;transform:scaleX(0.8271);-webkit-text-stroke:.7px #111;">Ассистент</span>
<span class="t" id="t49" style="left:361.0px;top:731.1px;font-size:32.30px;color:#111;font-family:'Liberation Sans', sans-serif;transform:scaleX(0.8538);-webkit-text-stroke:.7px #111;">Куратор</span>
<span class="t" id="t50" style="left:361.0px;top:976.7px;font-size:32.30px;color:#111;font-family:'Liberation Sans', sans-serif;transform:scaleX(0.8484);-webkit-text-stroke:.7px #111;">Наставник</span>
<span class="t" id="t51" style="left:361.0px;top:1218.6px;font-size:32.30px;color:#111;font-family:'Liberation Sans', sans-serif;transform:scaleX(0.8421);-webkit-text-stroke:.7px #111;">Волонтер</span>
<span class="t" id="t52" style="left:308.5px;top:516.6px;font-size:32.30px;color:#111;font-family:'Liberation Sans', sans-serif;transform:scaleX(0.8485);-webkit-text-stroke:.7px #111;">1</span>
<span class="t" id="t53" style="left:308.5px;top:624.3px;font-size:32.30px;color:#111;font-family:'Liberation Sans', sans-serif;transform:scaleX(0.8485);-webkit-text-stroke:.7px #111;">2</span>
<span class="t" id="t54" style="left:308.5px;top:731.1px;font-size:32.30px;color:#111;font-family:'Liberation Sans', sans-serif;transform:scaleX(0.8485);-webkit-text-stroke:.7px #111;">3</span>
<span class="t" id="t55" style="left:308.5px;top:976.7px;font-size:32.30px;color:#111;font-family:'Liberation Sans', sans-serif;transform:scaleX(0.8485);-webkit-text-stroke:.7px #111;">4</span>
<span class="t" id="t56" style="left:308.5px;top:1218.6px;font-size:32.30px;color:#111;font-family:'Liberation Sans', sans-serif;transform:scaleX(0.8485);-webkit-text-stroke:.7px #111;">5</span>
<span class="t" id="t57" style="left:1443.0px;top:1452.6px;font-size:21.00px;color:#8c8c8c;font-family:'Liberation Sans', sans-serif;transform:scaleX(0.7701);">2</span>
<span class="t" id="t58" style="left:118.4px;top:1581.2px;font-size:17.40px;color:#fff;font-family:'Liberation Serif', serif;font-weight:700;transform:scaleX(0.9652);">RUDN</span>
<span class="t" id="t59" style="left:118.4px;top:1595.3px;font-size:20.50px;color:#fff;font-family:'Liberation Serif', serif;transform:scaleX(0.9451);-webkit-text-stroke:0.3px;">university</span>
<span class="t" id="t60" style="left:1895.5px;top:618.1px;font-size:12.50px;color:#4a4a4e;font-family:'Liberation Serif', serif;font-weight:700;font-style:italic;transform:rotate(4.8deg) scaleX(0.8141);z-index:3;">МЕЛЬНИК</span>
<span class="t" id="t61" style="left:1877.6px;top:634.7px;font-size:12.50px;color:#4a4a4e;font-family:'Liberation Serif', serif;font-weight:700;font-style:italic;transform:rotate(5deg) scaleX(0.8268);z-index:3;">Юлия Николаевна</span>
<div style="left:2087.5px;top:1453.0px;width:199.3px;height:60.0px;background:#e8e8e8;border-radius:30px;box-shadow:0 2px 6px rgba(0,0,0,.5);z-index:5;"></div>
<div style="left:1769.6px;top:1536.0px;width:517.2px;height:88.6px;background:#f2f2f2;border-radius:7px/9px;z-index:4;"></div>
<svg style="left:0;top:0;z-index:7;" width="2339" height="1654" viewBox="0 0 2339 1654"><polyline points="2098,1477.6 2110.6,1493 2123.2,1477.6" stroke="#55565a" stroke-width="2.8" fill="none"/>
<g stroke="#757575" fill="none"><ellipse cx="2192" cy="1580" rx="12.8" ry="16.4" stroke-width="3"/><path d="M2184.2 1577 L2187 1573 L2189.8 1577" stroke-width="2"/><path d="M2194.2 1577 L2197 1573 L2199.8 1577" stroke-width="2"/><path d="M2184.6 1583.5 H2199.4 Q2198.6 1591 2192 1591 Q2185.400 1591 2184.6 1583.5 Z" fill="#757575" stroke="none"/></g>
<polygon points="2238.6,1566.4 2265.2,1580.4 2238.6,1594.4 2238.6,1583.8 2256.5,1580.4 2238.6,1577" fill="#b5b5b5"/></svg>
</body></html>
